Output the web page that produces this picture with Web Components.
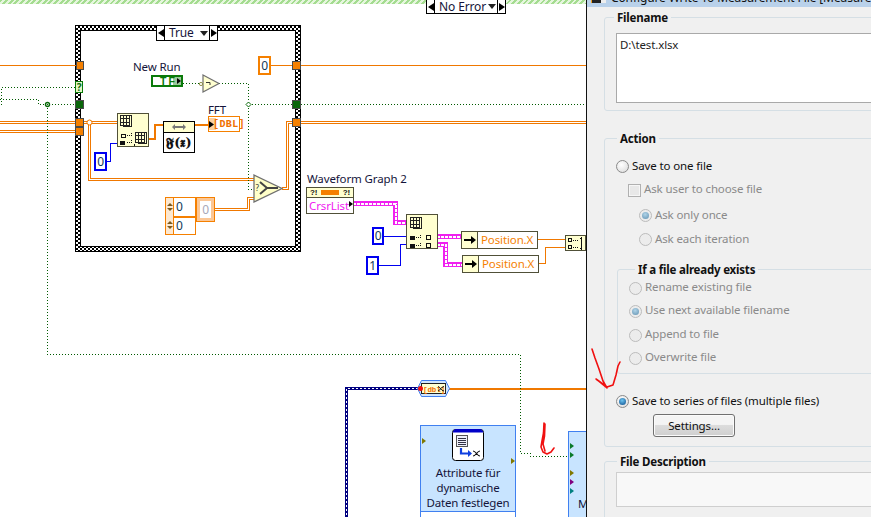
<!DOCTYPE html>
<html>
<head>
<meta charset="utf-8">
<title>LabVIEW block diagram</title>
<style>
  html,body{margin:0;padding:0;background:#fff;}
</style>
</head>
<body>
<lv-window>
  <lv-diagram>
    <lv-selector x="426" y="-1" w="80" h="15">No Error</lv-selector>
    <lv-case x="75" y="25" w="226" h="227"></lv-case>
    <lv-selector x="156" y="25" w="62" h="16">True</lv-selector>
    <lv-wires></lv-wires>

    <lv-tunnel x="76" y="61" w="8" h="9" color="#f58000"></lv-tunnel>
    <lv-tunnel x="292" y="61" w="9" h="9" color="#f58000"></lv-tunnel>
    <lv-tunnel x="75" y="81" w="8" h="12" color="#e4f8c8" border="#0a7a0a" mark="?"></lv-tunnel>
    <lv-tunnel x="75" y="100" w="9" h="9" color="#0a660a"></lv-tunnel>
    <lv-tunnel x="292" y="100" w="9" h="9" color="#0a660a"></lv-tunnel>
    <lv-tunnel x="75" y="118" w="9" h="9" color="#f58000"></lv-tunnel>
    <lv-tunnel x="75" y="127" w="9" h="9" color="#f58000"></lv-tunnel>
    <lv-tunnel x="292" y="118" w="9" h="9" color="#f58000"></lv-tunnel>

    <lv-label x="133" y="60">New Run</lv-label>
    <lv-bool x="151" y="75" w="32" h="12"></lv-bool>
    <lv-not x="199" y="74" w="22" h="19"></lv-not>
    <lv-const x="258" y="56" w="13" h="19" color="#f58000">0</lv-const>

    <lv-index x="117" y="113" w="32" h="34" variant="one"></lv-index>
    <lv-const x="94" y="152" w="13" h="19" color="#0000f0">0</lv-const>
    <lv-formula x="163" y="121" w="32" h="32"></lv-formula>
    <lv-label x="208" y="103">FFT</lv-label>
    <lv-array-ind x="208" y="116" w="32" h="16"></lv-array-ind>

    <lv-select-fn x="253" y="174" w="31" h="29"></lv-select-fn>
    <lv-array-const x="165" y="197" w="31" h="38"></lv-array-const>
    <lv-elem x="196" y="197" w="19" h="25"></lv-elem>

    <lv-label x="307" y="172">Waveform Graph 2</lv-label>
    <lv-ref x="306" y="187" w="48" h="27"></lv-ref>
    <lv-index x="406" y="214" w="32" h="35" variant="two"></lv-index>
    <lv-const x="372" y="227" w="12" h="18" color="#0000f0">0</lv-const>
    <lv-const x="366" y="256" w="13" h="19" color="#0000f0">1</lv-const>
    <lv-prop x="461" y="231" w="77" h="18">Position.X</lv-prop>
    <lv-prop x="462" y="255" w="77" h="18">Position.X</lv-prop>
    <lv-build x="565" y="235" w="21" h="16"></lv-build>

    <lv-convert x="417" y="380" w="33" h="17"></lv-convert>
    <lv-express x="420" y="425" w="96" h="100" sub="Signale">Attribute für<br>dynamische<br>Daten festlegen</lv-express>
    <lv-express x="568" y="431" w="40" h="100" plain>M</lv-express>
    <lv-pin x="422" y="438" color="#807800"></lv-pin>
    <lv-pin x="511" y="458" color="#807800"></lv-pin>
    <lv-pin x="570" y="443" color="#0a7a2a"></lv-pin>
    <lv-pin x="570" y="452" color="#0a7a2a"></lv-pin>
    <lv-pin x="570" y="470" color="#807800"></lv-pin>
    <lv-pin x="570" y="479" color="#800080"></lv-pin>
    <lv-pin x="570" y="488" color="#008080"></lv-pin>
  </lv-diagram>

  <lv-dialog heading="Configure Write To Measurement File [Measurement File]">
    <lv-group label="Filename" style="height:92px;--legend-x:9px;--pad-top:15px;">
      <lv-textbox style="height:60px">D:\test.xlsx</lv-textbox>
    </lv-group>
    <lv-group label="Action" style="height:307px;margin-top:27px;--legend-x:12px;--pad-top:20px;">
      <lv-radio>Save to one file</lv-radio>
      <lv-check disabled style="margin:11px 0 0 12px">Ask user to choose file</lv-check>
      <lv-radio checked disabled style="margin:11px 0 0 23px">Ask only once</lv-radio>
      <lv-radio disabled style="margin:10px 0 0 23px">Ask each iteration</lv-radio>
      <lv-group label="If a file already exists" style="height:103px;margin:23px 0 0 1px;--legend-x:17px;--pad-top:11px;--pad-left:11px;--lift:-2px;">
        <lv-radio disabled>Rename existing file</lv-radio>
        <lv-radio checked disabled style="margin-top:9px">Use next available filename</lv-radio>
        <lv-radio disabled style="margin-top:10px">Append to file</lv-radio>
        <lv-radio disabled style="margin-top:9px">Overwrite file</lv-radio>
      </lv-group>
      <lv-radio checked style="margin-top:20px">Save to series of files (multiple files)</lv-radio>
      <lv-button style="margin:6px 0 0 37px">Settings...</lv-button>
    </lv-group>
    <lv-group label="File Description" style="height:80px;margin-top:14px;--legend-x:12px;--pad-top:10px;">
      <lv-textbox style="height:25px;--box-bg:#f8f8f8;--box-line:#cfcfcf"></lv-textbox>
    </lv-group>
  </lv-dialog>

  <lv-scribble></lv-scribble>
</lv-window>

<script>
// nodes on the diagram sit at their own place on the canvas, x/y/w/h come from attributes
class Placed extends HTMLElement {
  constructor() {
    super();
    this.attachShadow({ mode: "open" });
    this.shadowRoot.innerHTML = `<style>
      :host{position:absolute;display:block;box-sizing:border-box;font-family:"Noto Sans",sans-serif;font-size:11.5px;letter-spacing:-.12px;line-height:14px;}
      ${this.css()}
    </style>${this.html()}`;
  }
  connectedCallback() {
    for (const [attr, prop] of [["x", "left"], ["y", "top"], ["w", "width"], ["h", "height"]]) {
      if (this.hasAttribute(attr)) this.style[prop] = this.getAttribute(attr) + "px";
    }
  }
  css() { return ""; }
  html() { return "<slot></slot>"; }
}

class Window_ extends HTMLElement {
  constructor() {
    super();
    this.attachShadow({ mode: "open" });
    this.shadowRoot.innerHTML = `<style>
      :host{display:flex;position:relative;width:871px;height:517px;overflow:hidden;background:#fff;}
    </style><slot></slot>`;
  }
}
customElements.define("lv-window", Window_);

class Diagram extends HTMLElement {
  constructor() {
    super();
    this.attachShadow({ mode: "open" });
    this.shadowRoot.innerHTML = `<style>
      :host{display:block;position:relative;flex:0 0 586px;height:517px;overflow:hidden;background:#fff;}
      #hatch{height:4px;background:repeating-linear-gradient(135deg,#a4dc90 0 2px,#e6f6de 2px 4px);}
    </style><div id="hatch"></div><slot></slot>`;
  }
}
customElements.define("lv-diagram", Diagram);

class Case extends Placed {
  css() { return `
    :host{background:repeating-conic-gradient(#000 0 25%,#fff 0 50%) 0 0/4px 4px;border:1px solid #000;padding:5px;}
    #in{height:100%;background:#fff;box-shadow:0 0 0 1px #000;}`; }
  html() { return `<div id="in"></div>`; }
}
customElements.define("lv-case", Case);

class Selector extends Placed {
  css() { return `
    :host{display:flex;align-items:stretch;background:#fff;border:1px solid #000;font-size:12px;color:#14143a;}
    .arr{width:7px;display:flex;align-items:center;justify-content:center;border-right:1px solid #000;}
    .arr:last-child{border-right:0;border-left:1px solid #000;}
    .arr svg{display:block;}
    #t{flex:1;display:flex;align-items:center;padding-left:4px;white-space:nowrap;}
    #t span{flex:1;}
    #d{width:0;height:0;border:4px solid transparent;border-top:5px solid #222;border-bottom:0;margin-right:1px;}`; }
  html() { return `<div class="arr"><svg width="6" height="8"><path d="M0 4L6 0V8Z" fill="#000"/></svg></div>
    <div id="t"><span><slot></slot></span><div id="d"></div></div>
    <div class="arr"><svg width="6" height="8"><path d="M6 4L0 0V8Z" fill="#000"/></svg></div>`; }
}
customElements.define("lv-selector", Selector);

class Wires extends Placed {
  css() { return `
    :host{left:0;top:0;width:586px;height:517px;}
    svg{display:block;}
    path{fill:none;}
    .o{stroke:#f07800;stroke-width:1;}
    .ot{stroke:#f07800;stroke-width:2;}
    .d1{stroke:#f07800;stroke-width:3;}
    .d2{stroke:#fff;stroke-width:1;}
    .g{stroke:#005a00;stroke-width:1;stroke-dasharray:1 2;}
    .b{stroke:#0000f0;stroke-width:1;}
    .m1{stroke:#f020f0;stroke-width:5;}
    .m2{stroke:#fff;stroke-width:2;stroke-dasharray:3 1;}
    .n1{stroke:#000080;stroke-width:3;}
    .n2{stroke:#fff;stroke-width:1;stroke-dasharray:2 2;}`; }
  html() {
    const doubled = "M0 122.5H75M0 131.5H75M84 122.5H117M89.5 122.5V179.5H254M282 188.5H287.5V122.5H292M300 122.5H586M215 209.5H248.5V198.5H256";
    const cluster = "M353 203.5H395.5V222.5H407M437 236.5H461M437 244.5H445.5V264.5H463";
    const dyn = "M430 388.5H346.5V517";
    return `<svg width="586" height="517" shape-rendering="crispEdges">
      <path class="o" d="M0 65.5H76M300 65.5H586M271 65.5H292M537 239.5H566M538 263.5H545.5V247.5H566"/>
      <path class="d1" d="${doubled}"/><path class="d2" d="${doubled}"/>
      <path class="ot" d="M149 139H155V124.5H163M195 124.5H208M449 388.5H586"/>
      <path class="g" d="M1.5 105V87.5H76M0 99.5H38.5V104.5H76M47.5 104.5V354.5H520.5V453.5H530V456.5H568M183 83.5H200M219 83.5H248.5V189.5H255M248.5 104.5H292M301 104.5H586"/>
      <path class="b" d="M107 161.5H110.5V143.5H117M384 236.5H407M379 265.5H400.5V244.5H407"/>
      <path class="m1" d="${cluster}"/><path class="m2" d="${cluster}"/>
      <path class="n1" d="${dyn}"/><path class="n2" d="${dyn}"/>
      <g shape-rendering="auto">
        <circle cx="89.5" cy="122.5" r="2.5" fill="#fff" stroke="#f07800"/>
        <circle cx="47.5" cy="104.5" r="2" fill="#fff" stroke="#0a6a0a" stroke-width="1.4"/>
        <circle cx="47.5" cy="104.5" r=".7" fill="#0a6a0a"/>
        <path d="M248.5 102L251 104.5L248.5 107L246 104.5Z" style="fill:#fff" stroke="#0a6a0a"/>
      </g>
    </svg>`;
  }
}
customElements.define("lv-wires", Wires);

class Tunnel extends Placed {
  css() { return `:host{border:1px solid #4a4a4a;display:flex;align-items:center;justify-content:center;font-weight:700;font-size:10px;color:#0a6a0a;}`; }
  html() { return `<span id="m"></span>`; }
  connectedCallback() {
    super.connectedCallback();
    this.style.background = this.getAttribute("color");
    if (this.hasAttribute("border")) this.style.borderColor = this.getAttribute("border");
    this.shadowRoot.querySelector("#m").textContent = this.getAttribute("mark") || "";
  }
}
customElements.define("lv-tunnel", Tunnel);

class Label extends Placed {
  css() { return `:host{color:#14143a;white-space:nowrap;}`; }
}
customElements.define("lv-label", Label);

class Const extends Placed {
  css() { return `:host{border:2px solid var(--c);background:#fff;display:flex;align-items:center;justify-content:center;font-size:12px;color:#123a5a;}`; }
  connectedCallback() {
    super.connectedCallback();
    this.style.setProperty("--c", this.getAttribute("color"));
  }
}
customElements.define("lv-const", Const);

class Bool extends Placed {
  css() { return `
    :host{border:2px solid #0a7a0a;background:#fff;display:flex;align-items:center;font-weight:700;font-family:"Liberation Sans",sans-serif;font-size:10.5px;line-height:8px;color:#0a7a0a;letter-spacing:2px;padding-left:7px;}
    #t{position:relative;}
    #end{position:absolute;right:0;top:0;bottom:0;width:8px;background:#9cc99c;}
    svg{position:absolute;right:0;top:1px;}`; }
  html() { return `<div id="end"></div><span id="t">TF</span><svg width="4" height="6"><path d="M0 0L4 3L0 6Z" fill="#000"/></svg>`; }
}
customElements.define("lv-bool", Bool);

class Not extends Placed {
  html() { return `<svg width="22" height="19"><path d="M4 1L20 9.5L4 18Z" fill="#ffffd0" stroke="#707070" stroke-width="1.2"/>
    <circle cx="2" cy="10" r="1.6" fill="#fff" stroke="#7a7a20" stroke-width=".8"/>
    <path d="M7 8.5H11V11" fill="none" stroke="#333"/></svg>`; }
}
customElements.define("lv-not", Not);

class Index extends Placed {
  css() { return `:host{background:#ffffd0;border:1px solid #505038;} svg{display:block;}`; }
  html() { return `<svg width="30" height="33"></svg>`; }
  connectedCallback() {
    super.connectedCallback();
    const grid = (x, y) => `<g fill="none" stroke="#222" shape-rendering="crispEdges">
      <path d="M${x + 3}.5 ${y}.5h8v9M${x + 1}.5 ${y + 1}.5" />
      <rect x="${x}.5" y="${y}.5" width="9" height="10" fill="#ffffd0"/>
      <path d="M${x + 3}.5 ${y}.5v10M${x + 6}.5 ${y}.5v10M${x}.5 ${y + 3}.5h9M${x}.5 ${y + 7}.5h9M${x + 2}.5 ${y + 11}.5h9V${y + 2}"/></g>`;
    const term = (x, y, filled) => `<rect x="${x}.5" y="${y}.5" width="4" height="3" fill="${filled ? "#111" : "#ffffd0"}" stroke="#111" shape-rendering="crispEdges"/>`;
    const dots = (x, y) => `<path d="M${x} ${y}.5h4M${x + 4}.5 ${y - 2}v4" stroke="#111" stroke-dasharray="1 1" shape-rendering="crispEdges"/>`;
    const svg = this.shadowRoot.querySelector("svg");
    if (this.getAttribute("variant") === "one") {
      svg.innerHTML = grid(2, 1) + term(3, 20, false) + dots(9, 21) + term(2, 27, true) + dots(9, 28) + grid(17, 18) + `<path d="M16 30h1v2h-1z" fill="#111"/>`;
    } else {
      svg.innerHTML = grid(3, 2) + term(3, 21, true) + dots(9, 22) + term(3, 30 - 1, true) + dots(9, 30)
        + `<rect x="19.5" y="20.5" width="4" height="4" fill="none" stroke="#111"/><rect x="19.5" y="28.5" width="4" height="4" fill="none" stroke="#111"/>`;
    }
  }
}
customElements.define("lv-index", Index);

class Formula extends Placed {
  css() { return `
    :host{border:1px solid #000;background:#fff;display:flex;flex-direction:column;}
    #top{height:10px;background:#ffffd0;border-bottom:1px solid #000;display:flex;align-items:center;justify-content:center;}
    #f{flex:1;display:flex;align-items:center;justify-content:center;font-family:"DejaVu Serif","Liberation Serif",serif;font-weight:700;font-size:13px;letter-spacing:0;color:#111;}`; }
  html() { return `<div id="top"><svg width="14" height="8"><path d="M0 4L3 1V3H11V1L14 4L11 7V5H3V7Z" fill="#777"/></svg></div><div id="f">𝕱(𝖝)</div>`; }
}
customElements.define("lv-formula", Formula);

class ArrayInd extends Placed {
  css() { return `
    :host{border:1px solid #f58000;background:#fff;display:flex;align-items:center;font:700 10px "Liberation Mono",monospace;color:#f07000;padding-left:4px;letter-spacing:.4px;}
    #pale{position:absolute;left:0;top:1px;bottom:1px;width:7px;background:#fbcfa0;}
    #t{position:relative;}
    svg{position:absolute;left:0;top:4px;}`; }
  html() { return `<div id="pale"></div><span id="t">[DBL]</span><svg width="5" height="7"><path d="M0 0L5 3.5L0 7Z" fill="#000"/></svg>`; }
}
customElements.define("lv-array-ind", ArrayInd);

class SelectFn extends Placed {
  html() { return `<svg width="31" height="29"><path d="M1 1L29 14.5L1 28Z" fill="#ffffc8" stroke="#707070" stroke-width="1.3"/>
    <path d="M7 8L14 14L7 20M14 14H25" fill="none" stroke="#444" stroke-width="2"/>
    <text x="2.5" y="17" font-size="8" font-family="Noto Sans" fill="#333">?</text></svg>`; }
}
customElements.define("lv-select-fn", SelectFn);

class ArrayConst extends Placed {
  css() { return `
    :host{display:grid;grid-template-columns:8px 1fr;grid-template-rows:1fr 1fr;border:1px solid #f58000;background:#fff;font-size:12px;color:#123a5a;}
    .i{background:#fde8d0;border-right:1px solid #f58000;display:flex;flex-direction:column;align-items:center;justify-content:center;gap:2px;}
    .i i{width:0;height:0;border:3px solid transparent;}
    .i i:first-child{border-bottom:3px solid #7a5a20;border-top:0;}
    .i i:last-child{border-top:3px solid #7a5a20;border-bottom:0;}
    .v{display:flex;align-items:center;padding-left:2px;}
    .b{border-top:2px solid #f58000;}`; }
  html() { return `<div class="i"><i></i><i></i></div><div class="v">0</div><div class="i"><i></i><i></i></div><div class="v b">0</div>`; }
}
customElements.define("lv-array-const", ArrayConst);

class Elem extends Placed {
  css() { return `
    :host{border:1px solid #f58000;background:#fbc796;padding:3px;}
    #v{height:100%;box-sizing:border-box;background:#fff;display:flex;align-items:center;justify-content:center;color:#a8a8b8;font-size:12px;}`; }
  html() { return `<div id="v">0</div>`; }
}
customElements.define("lv-elem", Elem);

class Ref extends Placed {
  css() { return `
    :host{border:1px solid #505038;background:#fff;display:flex;flex-direction:column;}
    #h{height:9px;background:#ffffd0;border-bottom:1px solid #505038;display:flex;align-items:center;justify-content:space-between;padding:0 3px;font:700 8px "Liberation Sans",sans-serif;color:#111;}
    #h b{flex:1;height:5px;background:#f58000;margin:0 4px;}
    #n{flex:1;display:flex;align-items:center;padding-left:2px;color:#f020f0;white-space:nowrap;}
    svg{position:absolute;right:0;bottom:6px;}`; }
  html() { return `<div id="h">?!<b></b>?!</div><div id="n">CrsrList</div><svg width="4" height="6"><path d="M0 0L4 3L0 6Z" fill="#000"/></svg>`; }
}
customElements.define("lv-ref", Ref);

class Prop extends Placed {
  css() { return `
    :host{border:1px solid #505038;background:#fff;display:flex;}
    #a{width:15px;background:#ffffd0;border-right:1px solid #505038;display:flex;align-items:center;justify-content:center;}
    #t{flex:1;display:flex;align-items:center;padding-left:3px;color:#f58000;white-space:nowrap;}`; }
  html() { return `<div id="a"><svg width="12" height="8"><path d="M0 3H7V0L12 4L7 8V5H0Z" fill="#000"/></svg></div><div id="t"><slot></slot></div>`; }
}
customElements.define("lv-prop", Prop);

class Build extends Placed {
  css() { return `:host{background:#ffffd0;border:1px solid #505038;}`; }
  html() { return `<svg width="20" height="14" shape-rendering="crispEdges" style="display:block">
    <rect x="2.5" y="2.5" width="3" height="3" fill="none" stroke="#111"/><rect x="2.5" y="9.5" width="3" height="3" fill="none" stroke="#111"/>
    <path d="M7 4.5h6M7 11.5h6" stroke="#111" stroke-dasharray="1 1"/><path d="M15.5 1v13M14 2.5h2M14 12.5h2" stroke="#111"/></svg>`; }
}
customElements.define("lv-build", Build);

class Convert extends Placed {
  html() { return `<svg width="33" height="17"><path d="M4.5 .5H28.5L32.5 8.5L28.5 16.5H4.5L.5 8.5Z" fill="#cfe6ff" stroke="#4080f0"/>
    <rect x="4.5" y="3.5" width="24" height="10" fill="#ffffd0" stroke="#222"/>
    <text x="6" y="11.5" font-family="Liberation Mono" font-size="7.5" font-weight="700" fill="#f07000">[dbl]</text>
    <path d="M21 6.5C23 6.5 24 11 27 11M21 11C23 11 24 6.5 27 6.5" fill="none" stroke="#111"/>
    <circle cx="3.5" cy="8.5" r="2.5" fill="#f01010"/></svg>`; }
}
customElements.define("lv-convert", Convert);

class Express extends Placed {
  css() { return `
    :host{background:#c8e4ff;border:1px solid #4080f0;color:#14143a;font-size:11.5px;letter-spacing:-.2px;line-height:15px;text-align:center;overflow:hidden;white-space:nowrap;}
    #ic{width:32px;height:32px;margin:3px auto 0;display:block;}
    #txt{margin-top:4px;height:46px;}
    #sub{border-top:1px solid #4080f0;background:#fff;color:#0000f0;height:40px;padding-top:2px;}
    :host([plain]) #ic{visibility:hidden;}
    :host([plain]) #txt{text-align:left;padding:29px 0 0 9px;margin:0;}`; }
  html() { return `<svg id="ic" viewBox="0 0 32 32">
      <rect x=".5" y=".5" width="31" height="31" rx="3" fill="#fff" stroke="#000"/>
      <path d="M3 .5H29L31 3H1Z" fill="#0000c8" stroke="#0000c8"/>
      <rect x="4.5" y="6.5" width="11" height="11" fill="#eef0fa" stroke="#555" shape-rendering="crispEdges"/>
      <path d="M6 9h8M6 11h8M6 13h8M6 15h8" stroke="#334" shape-rendering="crispEdges"/>
      <path d="M9 19V24.5H17" fill="none" stroke="#1040e0" stroke-width="2.2"/><path d="M16 21L20 24.5L16 28Z" fill="#1040e0"/>
      <path d="M21 22C24 22 25 27 28 27M21 27C24 27 25 22 28 22" fill="none" stroke="#111" stroke-width="1.2"/>
    </svg><div id="txt"><slot></slot></div><div id="sub"></div>`; }
  connectedCallback() {
    super.connectedCallback();
    this.shadowRoot.querySelector("#sub").textContent = this.getAttribute("sub") || "";
  }
}
customElements.define("lv-express", Express);

class Pin extends Placed {
  css() { return `:host{width:0;height:0;border:3px solid transparent;border-left:4px solid var(--c);border-right:0;}`; }
  html() { return ""; }
  connectedCallback() {
    super.connectedCallback();
    this.style.setProperty("--c", this.getAttribute("color"));
  }
}
customElements.define("lv-pin", Pin);

// the configuration dialog on the right, plain flow
class Dialog extends HTMLElement {
  constructor() {
    super();
    this.attachShadow({ mode: "open" });
    this.shadowRoot.innerHTML = `<style>
      :host{display:flex;flex-direction:column;flex:1;min-width:0;height:517px;overflow:hidden;background:#f0f0f0;border-left:1px solid #111;box-sizing:border-box;font-family:"Noto Sans",sans-serif;font-size:11.5px;letter-spacing:-.12px;color:#111;}
      #bar{flex:0 0 7px;display:flex;background:#b9d1ea;overflow:hidden;white-space:nowrap;line-height:14px;padding-left:4px;}
      #ico{width:9px;height:3px;background:#222;border-left:1px solid #f0a020;flex:none;}
      #x{width:5px;height:3px;background:#eee;margin-right:5px;flex:none;}
      #cap{margin-top:-9px;color:#111;flex:none;font-size:12px;}
      #body{padding:10px 0 0 17px;flex:1;min-height:0;}
    </style>
    <div id="bar"><div id="ico"></div><div id="x"></div><div id="cap"></div></div>
    <div id="body"><slot></slot></div>`;
    this.shadowRoot.querySelector("#cap").textContent = this.getAttribute("heading");
  }
}
customElements.define("lv-dialog", Dialog);

class Group extends HTMLElement {
  constructor() {
    super();
    this.attachShadow({ mode: "open" });
    this.shadowRoot.innerHTML = `<style>
      :host{display:block;position:relative;box-sizing:content-box;margin-right:-12px;border:1px solid #d5dfe5;border-radius:3px;}
      #legend{position:absolute;left:var(--legend-x,10px);top:-8px;padding:0 3px;background:#f0f0f0;font-weight:700;font-size:11.5px;letter-spacing:-.2px;line-height:15px;color:#111;white-space:nowrap;}
      #in{padding:var(--pad-top,12px) 0 0 var(--pad-left,11px);}
    </style><div id="legend"></div><div id="in"><slot></slot></div>`;
    this.shadowRoot.querySelector("#legend").textContent = this.getAttribute("label");
  }
}
customElements.define("lv-group", Group);

class Textbox extends HTMLElement {
  constructor() {
    super();
    this.attachShadow({ mode: "open" });
    this.shadowRoot.innerHTML = `<style>
      :host{display:block;background:var(--box-bg,#fff);border:1px solid var(--box-line,#a9a9a9);padding:4px 3px;box-sizing:content-box;line-height:14px;color:#222;}
    </style><slot></slot>`;
  }
}
customElements.define("lv-textbox", Textbox);

class Radio extends HTMLElement {
  constructor() {
    super();
    this.attachShadow({ mode: "open" });
    this.shadowRoot.innerHTML = `<style>
      :host{display:flex;align-items:center;height:14px;gap:3px;white-space:nowrap;color:#111;}
      :host([disabled]){color:#8a8a8a;}
      #c{flex:none;width:13px;height:13px;box-sizing:border-box;border-radius:50%;border:1px solid #8a8a8a;background:radial-gradient(circle at 40% 35%,#fff,#d8d8d8);display:flex;align-items:center;justify-content:center;}
      :host([disabled]) #c{border-color:#bcbcbc;background:#ececec;}
      #c i{display:none;width:7px;height:7px;border-radius:50%;background:radial-gradient(circle at 45% 35%,#6cc4f0,#0a4a8a);}
      :host([checked]) #c i{display:block;}
      :host([checked][disabled]) #c i{background:radial-gradient(circle at 45% 35%,#b0d4e8,#6090b0);}
      span{position:relative;top:var(--lift,-.5px);}
    </style><div id="c"><i></i></div><span><slot></slot></span>`;
  }
}
customElements.define("lv-radio", Radio);

class Check extends HTMLElement {
  constructor() {
    super();
    this.attachShadow({ mode: "open" });
    this.shadowRoot.innerHTML = `<style>
      :host{display:flex;align-items:center;height:13px;gap:3px;white-space:nowrap;color:#111;}
      :host([disabled]){color:#8a8a8a;}
      #b{flex:none;width:13px;height:13px;box-sizing:border-box;border:1px solid #b0b0b0;background:#e8e8e8;box-shadow:inset 0 0 0 1px #f6f6f6;}
      span{position:relative;top:-2px;}
    </style><div id="b"></div><span><slot></slot></span>`;
  }
}
customElements.define("lv-check", Check);

class Button extends HTMLElement {
  constructor() {
    super();
    this.attachShadow({ mode: "open" });
    this.shadowRoot.innerHTML = `<style>
      :host{display:flex;align-items:center;justify-content:center;width:82px;height:23px;box-sizing:border-box;border:1px solid #707070;border-radius:3px;background:linear-gradient(#f4f4f4 0 45%,#dcdcdc 50%,#cfcfcf);box-shadow:inset 0 0 0 1px #fbfbfb;color:#111;}
    </style><slot></slot>`;
  }
}
customElements.define("lv-button", Button);

class Scribble extends HTMLElement {
  constructor() {
    super();
    this.attachShadow({ mode: "open" });
    this.shadowRoot.innerHTML = `<style>
      :host{position:absolute;inset:0;pointer-events:none;}
      path{fill:none;stroke:#f01010;stroke-width:1.6;stroke-linecap:round;stroke-linejoin:round;}
    </style><svg width="871" height="517">
      <path d="M592 349L595 358L599 369L603 381L607 388L596 379L607 387L613 385L616 375L618 366L620 362"/>
      <path d="M544 423L543.5 433L542 441L541 447L543 452L547 454L551 452L554 448M545 424L544.5 436L543 444L545 451"/>
    </svg>`;
  }
}
customElements.define("lv-scribble", Scribble);
</script>
</body>
</html>
